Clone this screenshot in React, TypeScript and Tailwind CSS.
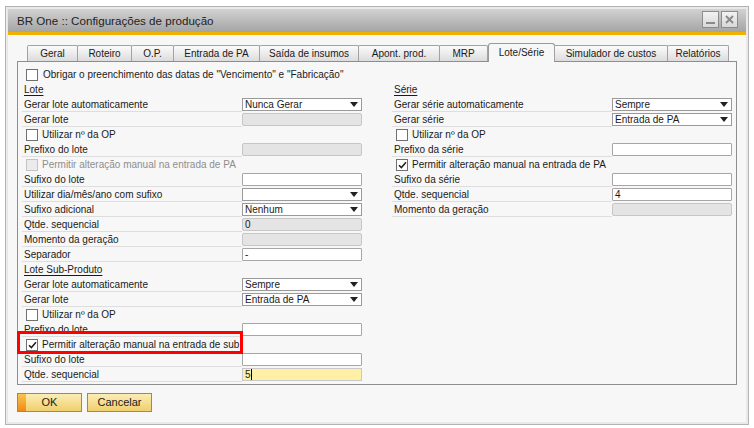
import React from 'react';

type Kind = 'select' | 'input' | 'disabled' | 'yellow';

type Row =
  | { t: 'header'; label: string }
  | { t: 'field'; label: string; kind: Kind; value?: string }
  | { t: 'check'; label: string; checked?: boolean; disabled?: boolean; highlight?: boolean };

const leftRows: Row[] = [
  { t: 'header', label: 'Lote' },
  { t: 'field', label: 'Gerar lote automaticamente', kind: 'select', value: 'Nunca Gerar' },
  { t: 'field', label: 'Gerar lote', kind: 'disabled' },
  { t: 'check', label: 'Utilizar nº da OP' },
  { t: 'field', label: 'Prefixo do lote', kind: 'disabled' },
  { t: 'check', label: 'Permitir alteração manual na entrada de PA', disabled: true },
  { t: 'field', label: 'Sufixo do lote', kind: 'input' },
  { t: 'field', label: 'Utilizar dia/mês/ano com sufixo', kind: 'select', value: '' },
  { t: 'field', label: 'Sufixo adicional', kind: 'select', value: 'Nenhum' },
  { t: 'field', label: 'Qtde. sequencial', kind: 'disabled', value: '0' },
  { t: 'field', label: 'Momento da geração', kind: 'disabled' },
  { t: 'field', label: 'Separador', kind: 'input', value: '-' },
  { t: 'header', label: 'Lote Sub-Produto' },
  { t: 'field', label: 'Gerar lote automaticamente', kind: 'select', value: 'Sempre' },
  { t: 'field', label: 'Gerar lote', kind: 'select', value: 'Entrada de PA' },
  { t: 'check', label: 'Utilizar nº da OP' },
  { t: 'field', label: 'Prefixo do lote', kind: 'input' },
  { t: 'check', label: 'Permitir alteração manual na entrada de sub', checked: true, highlight: true },
  { t: 'field', label: 'Sufixo do lote', kind: 'input' },
  { t: 'field', label: 'Qtde. sequencial', kind: 'yellow', value: '5' },
];

const rightRows: Row[] = [
  { t: 'header', label: 'Série' },
  { t: 'field', label: 'Gerar série automaticamente', kind: 'select', value: 'Sempre' },
  { t: 'field', label: 'Gerar série', kind: 'select', value: 'Entrada de PA' },
  { t: 'check', label: 'Utilizar nº da OP' },
  { t: 'field', label: 'Prefixo da série', kind: 'input' },
  { t: 'check', label: 'Permitir alteração manual na entrada de PA', checked: true },
  { t: 'field', label: 'Sufixo da série', kind: 'input' },
  { t: 'field', label: 'Qtde. sequencial', kind: 'input', value: '4' },
  { t: 'field', label: 'Momento da geração', kind: 'disabled' },
];

const tabs = [
  { name: 'Geral', w: 'w-[51px]' },
  { name: 'Roteiro', w: 'w-[55px]' },
  { name: 'O.P.', w: 'w-[43px]' },
  { name: 'Entrada de PA', w: 'w-[87px]' },
  { name: 'Saída de insumos', w: 'w-[100px]' },
  { name: 'Apont. prod.', w: 'w-[82px]' },
  { name: 'MRP', w: 'w-[49px]' },
  { name: 'Lote/Série', w: 'w-[67px]', active: true },
  { name: 'Simulador de custos', w: 'w-[114px]' },
  { name: 'Relatórios', w: 'w-[62px]' },
];

const CheckBox = ({ checked, disabled }: { checked?: boolean; disabled?: boolean }) => (
  <div
    className={`w-[12px] h-[12px] border flex items-center justify-center shrink-0 ${
      disabled ? 'border-[#c4c4c4] bg-[#ebebeb]' : 'border-[#707070] bg-white'
    }`}
  >
    {checked ? (
      <svg width="9" height="8" viewBox="0 0 9 8">
        <path d="M1 4.2 L3.4 6.6 L8 1.2" stroke="#1e1e1e" strokeWidth="1.5" fill="none" />
      </svg>
    ) : null}
  </div>
);

const Field = ({ kind, value }: { kind: Kind; value?: string }) => {
  if (kind === 'select') {
    return (
      <div className="w-[120px] h-[13px] border border-[#9a9a9a] bg-white flex items-center justify-between pl-[2px] pr-[3px]">
        <span className="leading-none">{value}</span>
        <svg width="8" height="5" viewBox="0 0 8 5">
          <path d="M0 0 H8 L4 5 Z" fill="#222" />
        </svg>
      </div>
    );
  }
  if (kind === 'disabled') {
    return (
      <div className="w-[120px] h-[13px] border border-[#c6c6c6] bg-[#e4e4e4] rounded-[2px] flex items-center pl-[2px]">
        <span className="leading-none">{value}</span>
      </div>
    );
  }
  if (kind === 'yellow') {
    return (
      <div className="w-[120px] h-[13px] border border-[#c8c8c8] bg-[#fff0a5] flex items-center pl-[2px]">
        <span className="leading-none">{value}</span>
        <span className="w-px h-[11px] bg-black" />
      </div>
    );
  }
  return (
    <div className="w-[120px] h-[13px] border border-[#a6a6a6] bg-white rounded-[1px] flex items-center pl-[2px]">
      <span className="leading-none">{value}</span>
    </div>
  );
};

const FormRow = ({ row }: { row: Row }) => {
  if (row.t === 'header') {
    return (
      <div className="h-[15px] flex items-center pl-[2px]">
        <span className="underline underline-offset-[2px]">{row.label}</span>
      </div>
    );
  }
  if (row.t === 'check') {
    return (
      <div className="h-[15px] flex items-center pl-[4px] gap-[4px] relative">
        <CheckBox checked={row.checked} disabled={row.disabled} />
        <span className={row.disabled ? 'text-[#8e8e8e]' : ''}>{row.label}</span>
        {row.highlight ? (
          <div className="absolute left-[-5px] top-[-6px] w-[226px] h-[23px] border-[3px] border-[#ff0000]" />
        ) : null}
      </div>
    );
  }
  return (
    <div className="h-[15px] flex items-center">
      <div className="w-[220px] h-[15px] flex items-center pl-[2px] border-b border-[#dedede]">
        {row.label}
      </div>
      <Field kind={row.kind} value={row.value} />
    </div>
  );
};

export default function App() {
  return (
    <div className="w-[754px] h-[428px] bg-white pt-[6px] pl-[5px] font-['Liberation_Sans',Arial,sans-serif] text-[10px] text-[#1a1a1a]">
      <div className="w-[744px] h-[419px] border border-[#b3b3b3] bg-[#e9e9e9] p-[2px] flex flex-col">
        {/* title bar */}
        <div className="h-[23px] bg-gradient-to-b from-[#d2d2d2] to-[#a4a4a4] flex items-center justify-between pl-[9px] pr-[8px]">
          <span className="text-[11.6px] text-[#222]">BR One :: Configurações de produção</span>
          <div className="flex gap-[2px] mt-[-2px]">
            <div className="w-[17px] h-[17px] border border-[#8c8c8c] bg-gradient-to-b from-[#f2f2f2] to-[#d8d8d8] flex items-end justify-center pb-[3px]">
              <div className="w-[9px] h-[2px] bg-[#8a8a8a]" />
            </div>
            <div className="w-[17px] h-[17px] border border-[#8c8c8c] bg-gradient-to-b from-[#f2f2f2] to-[#d8d8d8] flex items-center justify-center">
              <svg width="9" height="9" viewBox="0 0 9 9">
                <path d="M1 1 L8 8 M8 1 L1 8" stroke="#8a8a8a" strokeWidth="2" />
              </svg>
            </div>
          </div>
        </div>
        <div className="h-[3px] bg-[#f0b100]" />

        {/* body */}
        <div className="flex-1 bg-[#f7f7f7] pl-[9px] pt-[8px]">
          <div className="flex items-end h-[18px] ml-[10px] relative z-10">
            {tabs.map((tab) =>
              tab.active ? (
                <div
                  key={tab.name}
                  className={`${tab.w} h-[19px] mb-[-1px] border border-b-0 border-[#9a9a9a] rounded-t-[3px] bg-[#f7f7f7] flex items-center justify-center pb-[1px]`}
                >
                  {tab.name}
                </div>
              ) : (
                <div
                  key={tab.name}
                  className={`${tab.w} h-[16px] -ml-px first:ml-0 border border-b-0 border-[#a2a2a2] rounded-t-[2px] bg-gradient-to-b from-[#fbfbfb] to-[#dcdcdc] flex items-center justify-center`}
                >
                  {tab.name}
                </div>
              )
            )}
          </div>

          <div className="w-[720px] h-[324px] border border-[#8e8e8e] bg-[#f7f7f7] pt-[5px] pl-[4px]">
            <div className="h-[15px] flex items-center pl-[4px] gap-[5px]">
              <CheckBox />
              <span>Obrigar o preenchimento das datas de "Vencimento" e "Fabricação"</span>
            </div>
            <div className="flex gap-[30px]">
              <div className="w-[340px] flex flex-col">
                {leftRows.map((row, i) => (
                  <FormRow key={`l-${i}`} row={row} />
                ))}
              </div>
              <div className="w-[340px] flex flex-col">
                {rightRows.map((row, i) => (
                  <FormRow key={`r-${i}`} row={row} />
                ))}
              </div>
            </div>
          </div>

          <div className="flex gap-[5px] mt-[8px]">
            <div className="w-[65px] h-[19px] border border-[#8a8a8a] bg-gradient-to-b from-[#fcedb4] to-[#f0cf6c] flex relative">
              <div className="w-[8px] h-full bg-gradient-to-b from-[#f9c44a] to-[#ef8a10]" />
              <span className="absolute inset-0 flex items-center justify-center text-[11px]">OK</span>
            </div>
            <div className="w-[65px] h-[19px] border border-[#8a8a8a] bg-gradient-to-b from-[#fcedb4] to-[#f0cf6c] flex items-center justify-center text-[11px]">
              Cancelar
            </div>
          </div>
        </div>
      </div>
    </div>
  );
}
